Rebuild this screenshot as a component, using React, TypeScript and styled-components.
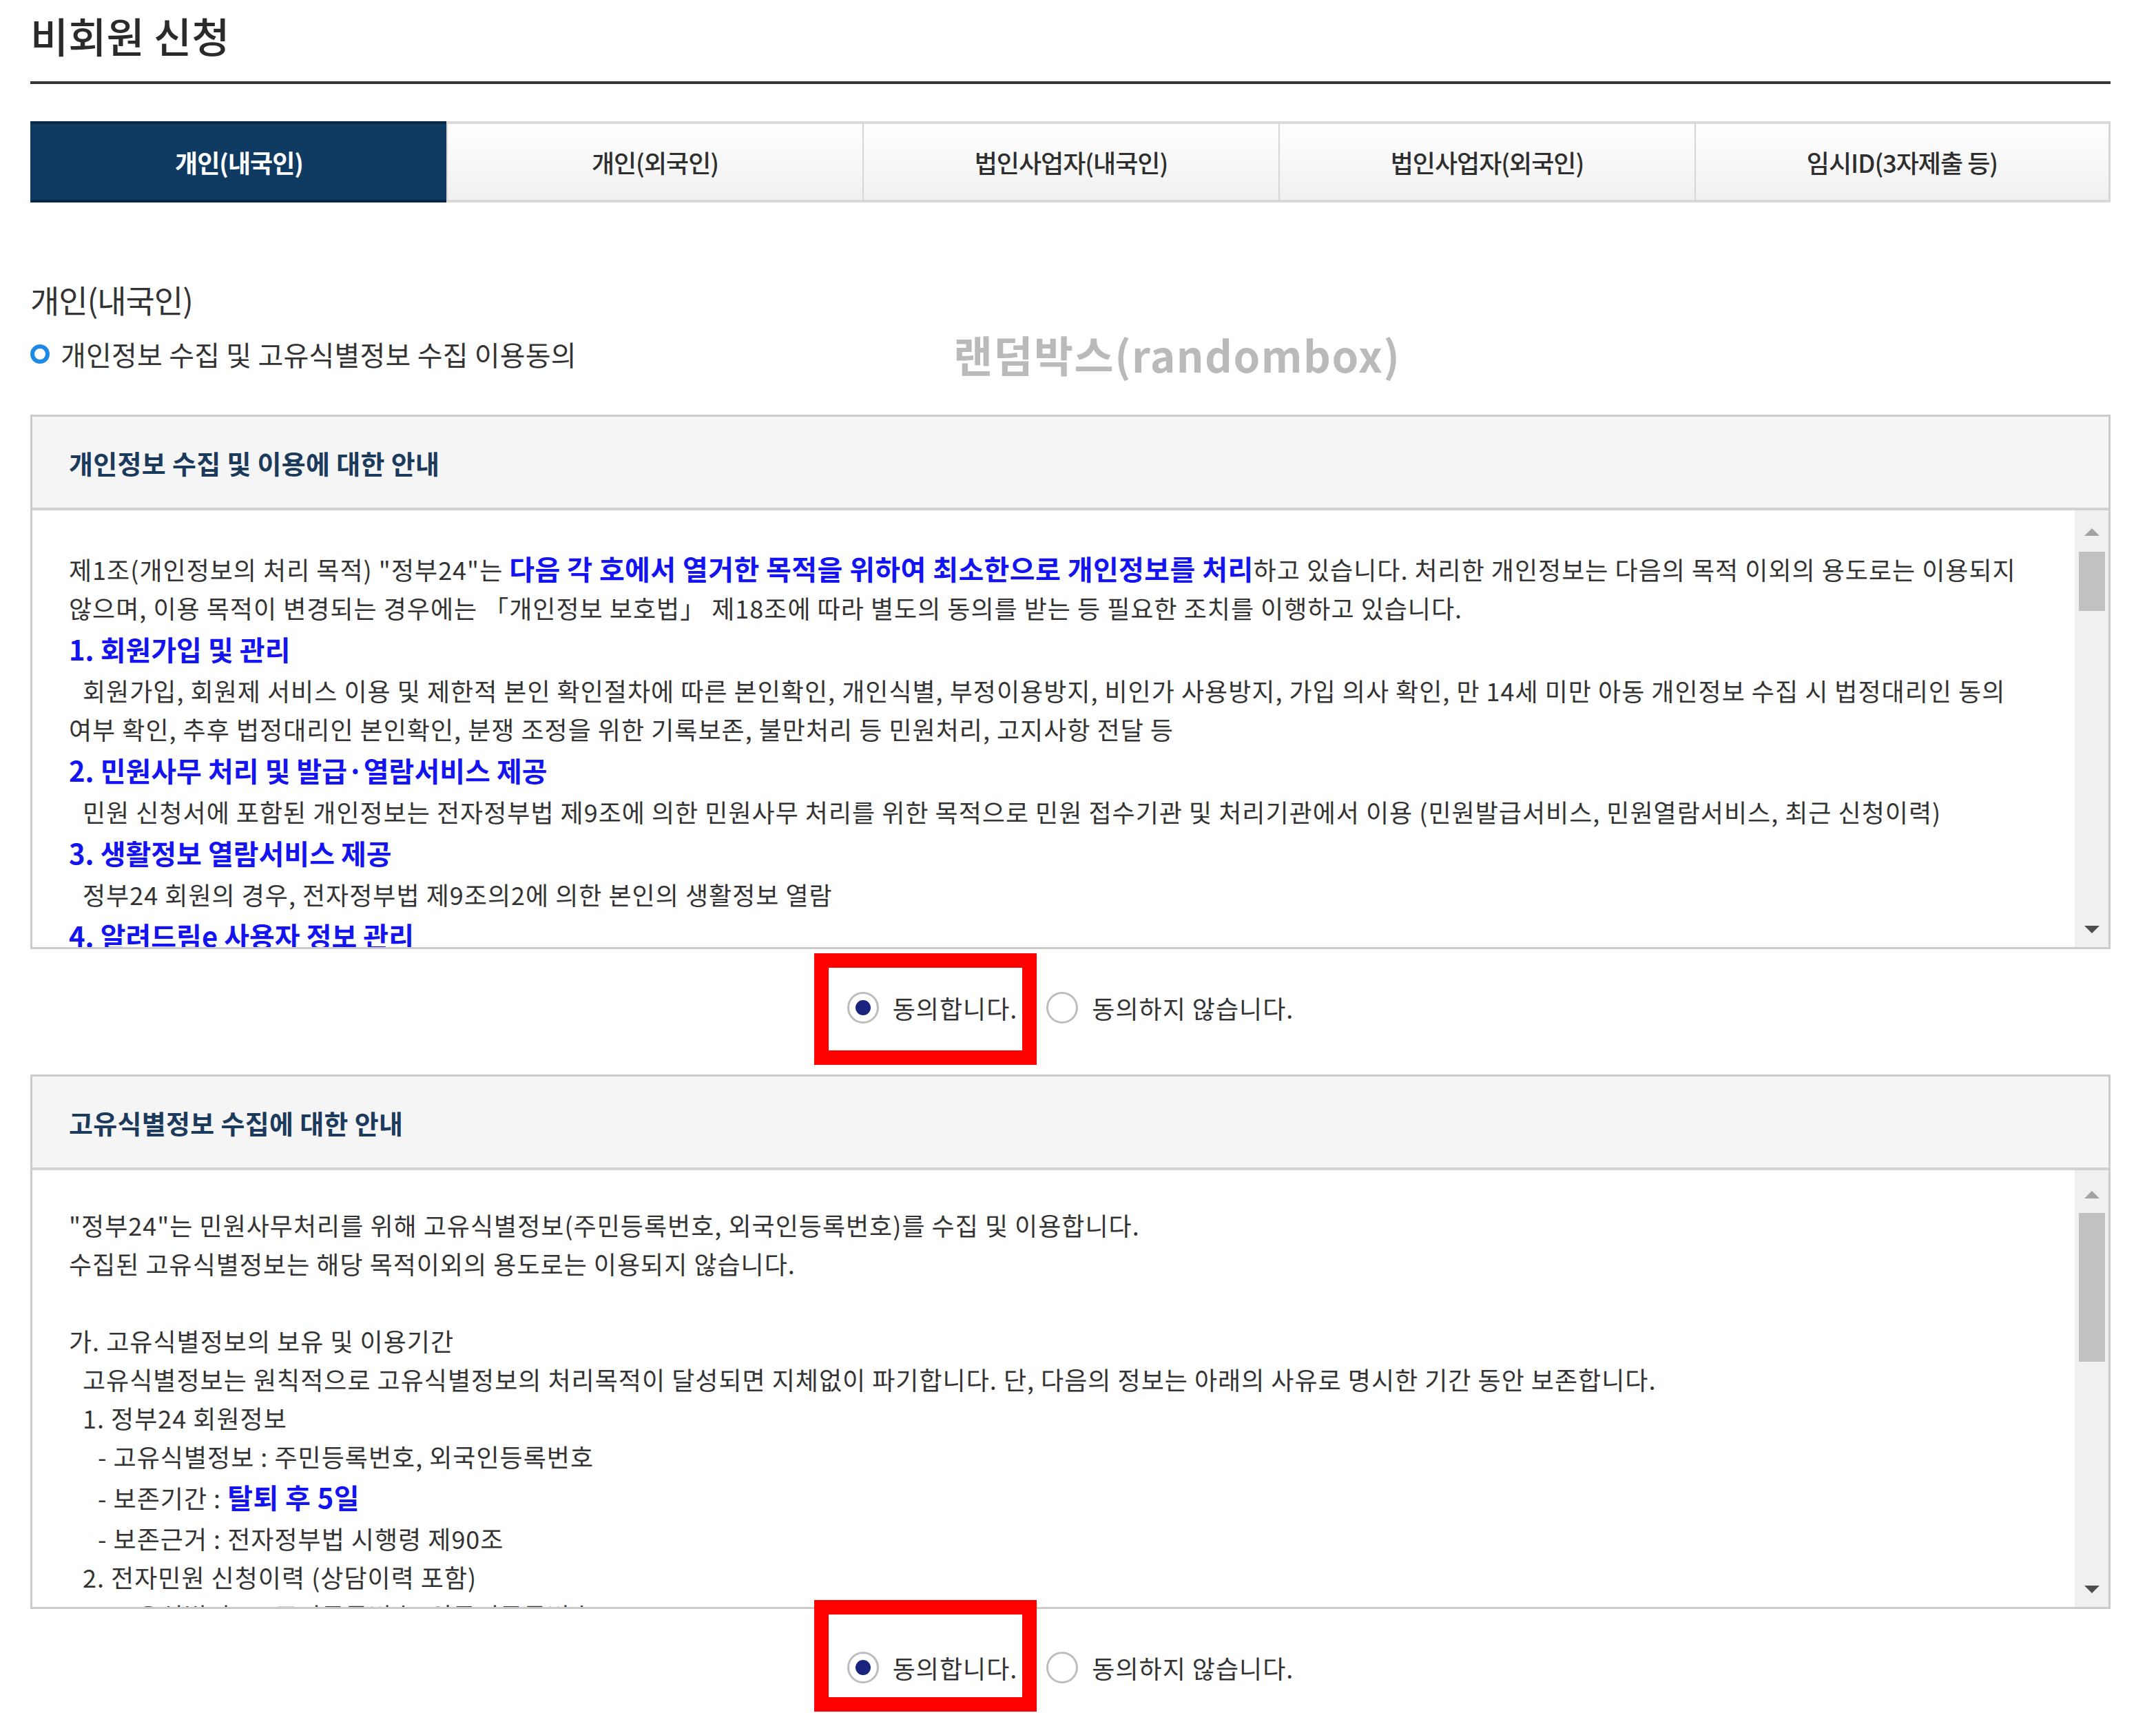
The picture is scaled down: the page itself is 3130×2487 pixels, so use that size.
import React from "react";
import styled, { createGlobalStyle } from "styled-components";

const GlobalStyle = createGlobalStyle`
  html, body { margin: 0; padding: 0; background: #fff; overflow: hidden; }
  body {
    font-family: "Noto Sans CJK KR", "Noto Sans", "Liberation Sans", sans-serif;
    color: #333;
  }
  * { box-sizing: border-box; }
`;

const Page = styled.div`
  width: 3130px;
  padding: 11px 66px 0 44px;
`;

const Title = styled.h1`
  margin: 0;
  font-size: 60px;
  line-height: 80px;
  font-weight: 500;
  color: #2a2a2a;
  letter-spacing: 0;
`;

const Rule = styled.div`
  margin-top: 27px;
  height: 4px;
  background: #333;
`;

const TabBar = styled.div`
  display: grid;
  grid-template-columns: repeat(5, 1fr);
  margin-top: 54px;
  height: 118px;
`;

const Tab = styled.div<{ $active?: boolean }>`
  display: flex;
  align-items: center;
  justify-content: center;
  font-size: 36px;
  letter-spacing: -1px;
  font-weight: ${(p) => (p.$active ? 700 : 500)};
  color: ${(p) => (p.$active ? "#fff" : "#2e2e2e")};
  background: ${(p) =>
    p.$active ? "#0f3a62" : "linear-gradient(#ffffff, #f0f0f0)"};
  border-top: 4px solid ${(p) => (p.$active ? "#082845" : "#d9d9d9")};
  border-bottom: 4px solid ${(p) => (p.$active ? "#082845" : "#d9d9d9")};
  border-left: 2px solid ${(p) => (p.$active ? "#0f3a62" : "#d6d6d6")};
  &:last-child {
    border-right: 3px solid #d6d6d6;
  }
`;

const SectionHeading = styled.h2`
  margin: 110px 0 0;
  font-size: 46px;
  line-height: 60px;
  font-weight: 400;
  color: #333;
  letter-spacing: -1px;
`;

const IntroRow = styled.div`
  position: relative;
  margin-top: 20px;
  height: 60px;
  display: flex;
  align-items: center;
  gap: 16px;
`;

const Ring = styled.span`
  width: 28px;
  height: 28px;
  border-radius: 50%;
  border: 6px solid #1e8ae6;
  flex: none;
`;

const IntroText = styled.span`
  font-size: 40px;
  color: #333;
  letter-spacing: 0.2px;
`;

const Watermark = styled.span`
  position: absolute;
  left: 1340px;
  top: 50%;
  transform: translateY(-50%);
  font-size: 62px;
  font-weight: 700;
  color: #bababa;
  letter-spacing: 1.5px;
  white-space: nowrap;
`;

const Panel = styled.section<{ $first?: boolean }>`
  margin-top: ${(p) => (p.$first ? 58 : 0)}px;
  border: 3px solid #cbcbcb;
  height: 776px;
  display: flex;
  flex-direction: column;
`;

const PanelHeader = styled.div`
  height: 136px;
  flex: none;
  background: #f5f5f5;
  border-bottom: 4px solid #d2d2d2;
  display: flex;
  align-items: center;
  padding-left: 53px;
  font-size: 38px;
  font-weight: 700;
  color: #1b3a5c;
  letter-spacing: 0.3px;
`;

const PanelBody = styled.div`
  flex: 1;
  display: flex;
  min-height: 0;
`;

const Content = styled.div<{ $padTop: number }>`
  flex: 1;
  overflow: hidden;
  padding: ${(p) => p.$padTop}px 0 0 53px;
  font-size: 36px;
  letter-spacing: 1px;
  color: #333;
  white-space: nowrap;
`;

const Para = styled.div<{ $indent?: number; $tall?: boolean }>`
  line-height: ${(p) => (p.$tall ? 62 : 56)}px;
  text-indent: ${(p) => p.$indent ?? 0}px;
  min-height: 56px;
`;

const ItemTitle = styled.div`
  line-height: 64px;
  font-size: 40px;
  font-weight: 700;
  color: #1414f0;
  letter-spacing: 0;
`;

const Em = styled.strong`
  font-size: 40px;
  font-weight: 700;
  color: #1414f0;
  letter-spacing: 0.4px;
`;

const ScrollTrack = styled.div<{ $pad: number }>`
  width: 49px;
  flex: none;
  background: #f0f0f0;
  display: flex;
  flex-direction: column;
  align-items: center;
  padding: ${(p) => p.$pad}px 0 20px;
`;

const UpArrow = styled.span`
  width: 0;
  height: 0;
  border-left: 11px solid transparent;
  border-right: 11px solid transparent;
  border-bottom: 11px solid #a3a3a3;
`;

const DownArrow = styled.span`
  width: 0;
  height: 0;
  border-left: 11px solid transparent;
  border-right: 11px solid transparent;
  border-top: 11px solid #4d4d4d;
`;

const Thumb = styled.span<{ $offset: number; $height: number }>`
  width: 38px;
  margin-top: ${(p) => p.$offset}px;
  height: ${(p) => p.$height}px;
  background: #c1c1c1;
`;

const Spacer = styled.span`
  flex: 1;
`;

const RadioRow = styled.div`
  display: flex;
  justify-content: center;
  gap: 42px;
  height: 182px;
  padding-top: 62px;
`;

const Option = styled.label`
  position: relative;
  display: inline-flex;
  align-items: center;
  gap: 20px;
  height: 46px;
  font-size: 36px;
  color: #333;
  letter-spacing: 1px;
`;

const Radio = styled.span<{ $checked?: boolean }>`
  width: 46px;
  height: 46px;
  border-radius: 50%;
  border: 3px solid #bdbdbd;
  background: #fff;
  display: flex;
  align-items: center;
  justify-content: center;
  flex: none;
  &::after {
    content: "";
    width: 22px;
    height: 22px;
    border-radius: 50%;
    background: ${(p) => (p.$checked ? "#1a237e" : "transparent")};
  }
`;

const Highlight = styled.span<{ $top: number; $bottom: number }>`
  position: absolute;
  left: -48px;
  right: -28px;
  top: ${(p) => p.$top}px;
  bottom: ${(p) => p.$bottom}px;
  border: 21px solid #ff0000;
  pointer-events: none;
`;

const tabs = ["개인(내국인)", "개인(외국인)", "법인사업자(내국인)", "법인사업자(외국인)", "임시ID(3자제출 등)"];

function Scroll({ pad, offset, height }: { pad: number; offset: number; height: number }) {
  return (
    <ScrollTrack $pad={pad}>
      <UpArrow />
      <Thumb $offset={offset} $height={height} />
      <Spacer />
      <DownArrow />
    </ScrollTrack>
  );
}

function Agree({ top, bottom }: { top: number; bottom: number }) {
  return (
    <RadioRow>
      <Option>
        <Radio $checked />
        동의합니다.
        <Highlight $top={top} $bottom={bottom} />
      </Option>
      <Option>
        <Radio />
        동의하지 않습니다.
      </Option>
    </RadioRow>
  );
}

export default function App() {
  return (
    <>
      <GlobalStyle />
      <Page>
        <Title>비회원 신청</Title>
        <Rule />
        <TabBar>
          {tabs.map((t, i) => (
            <Tab key={t} $active={i === 0}>
              {t}
            </Tab>
          ))}
        </TabBar>

        <SectionHeading>개인(내국인)</SectionHeading>
        <IntroRow>
          <Ring />
          <IntroText>개인정보 수집 및 고유식별정보 수집 이용동의</IntroText>
          <Watermark>랜덤박스(randombox)</Watermark>
        </IntroRow>

        <Panel $first>
          <PanelHeader>개인정보 수집 및 이용에 대한 안내</PanelHeader>
          <PanelBody>
            <Content $padTop={56}>
              <Para>
                제1조(개인정보의 처리 목적) "정부24"는 <Em>다음 각 호에서 열거한 목적을 위하여 최소한으로 개인정보를 처리</Em>하고 있습니다. 처리한 개인정보는 다음의 목적 이외의 용도로는 이용되지
                <br />
                않으며, 이용 목적이 변경되는 경우에는 「개인정보 보호법」 제18조에 따라 별도의 동의를 받는 등 필요한 조치를 이행하고 있습니다.
              </Para>
              <ItemTitle>1. 회원가입 및 관리</ItemTitle>
              <Para $indent={20}>
                회원가입, 회원제 서비스 이용 및 제한적 본인 확인절차에 따른 본인확인, 개인식별, 부정이용방지, 비인가 사용방지, 가입 의사 확인, 만 14세 미만 아동 개인정보 수집 시 법정대리인 동의
                <br />
                여부 확인, 추후 법정대리인 본인확인, 분쟁 조정을 위한 기록보존, 불만처리 등 민원처리, 고지사항 전달 등
              </Para>
              <ItemTitle>2. 민원사무 처리 및 발급·열람서비스 제공</ItemTitle>
              <Para $indent={20}>
                민원 신청서에 포함된 개인정보는 전자정부법 제9조에 의한 민원사무 처리를 위한 목적으로 민원 접수기관 및 처리기관에서 이용 (민원발급서비스, 민원열람서비스, 최근 신청이력)
              </Para>
              <ItemTitle>3. 생활정보 열람서비스 제공</ItemTitle>
              <Para $indent={20}>정부24 회원의 경우, 전자정부법 제9조의2에 의한 본인의 생활정보 열람</Para>
              <ItemTitle>4. 알려드림e 사용자 정보 관리</ItemTitle>
            </Content>
            <Scroll pad={26} offset={23} height={86} />
          </PanelBody>
        </Panel>

        <Agree top={-56} bottom={-60} />

        <Panel>
          <PanelHeader>고유식별정보 수집에 대한 안내</PanelHeader>
          <PanelBody>
            <Content $padTop={51}>
              <Para>"정부24"는 민원사무처리를 위해 고유식별정보(주민등록번호, 외국인등록번호)를 수집 및 이용합니다.</Para>
              <Para>수집된 고유식별정보는 해당 목적이외의 용도로는 이용되지 않습니다.</Para>
              <Para />
              <Para>가. 고유식별정보의 보유 및 이용기간</Para>
              <Para $indent={20}>
                고유식별정보는 원칙적으로 고유식별정보의 처리목적이 달성되면 지체없이 파기합니다. 단, 다음의 정보는 아래의 사유로 명시한 기간 동안 보존합니다.
              </Para>
              <Para $indent={20}>1. 정부24 회원정보</Para>
              <Para $indent={42}>- 고유식별정보 : 주민등록번호, 외국인등록번호</Para>
              <Para $indent={42} $tall>
                - 보존기간 : <Em>탈퇴 후 5일</Em>
              </Para>
              <Para $indent={42}>- 보존근거 : 전자정부법 시행령 제90조</Para>
              <Para $indent={20}>2. 전자민원 신청이력 (상담이력 포함)</Para>
              <Para $indent={42}>- 고유식별정보 : 주민등록번호, 외국인등록번호</Para>
            </Content>
            <Scroll pad={30} offset={21} height={216} />
          </PanelBody>
        </Panel>

        <Agree top={-75} bottom={-41} />
      </Page>
    </>
  );
}
